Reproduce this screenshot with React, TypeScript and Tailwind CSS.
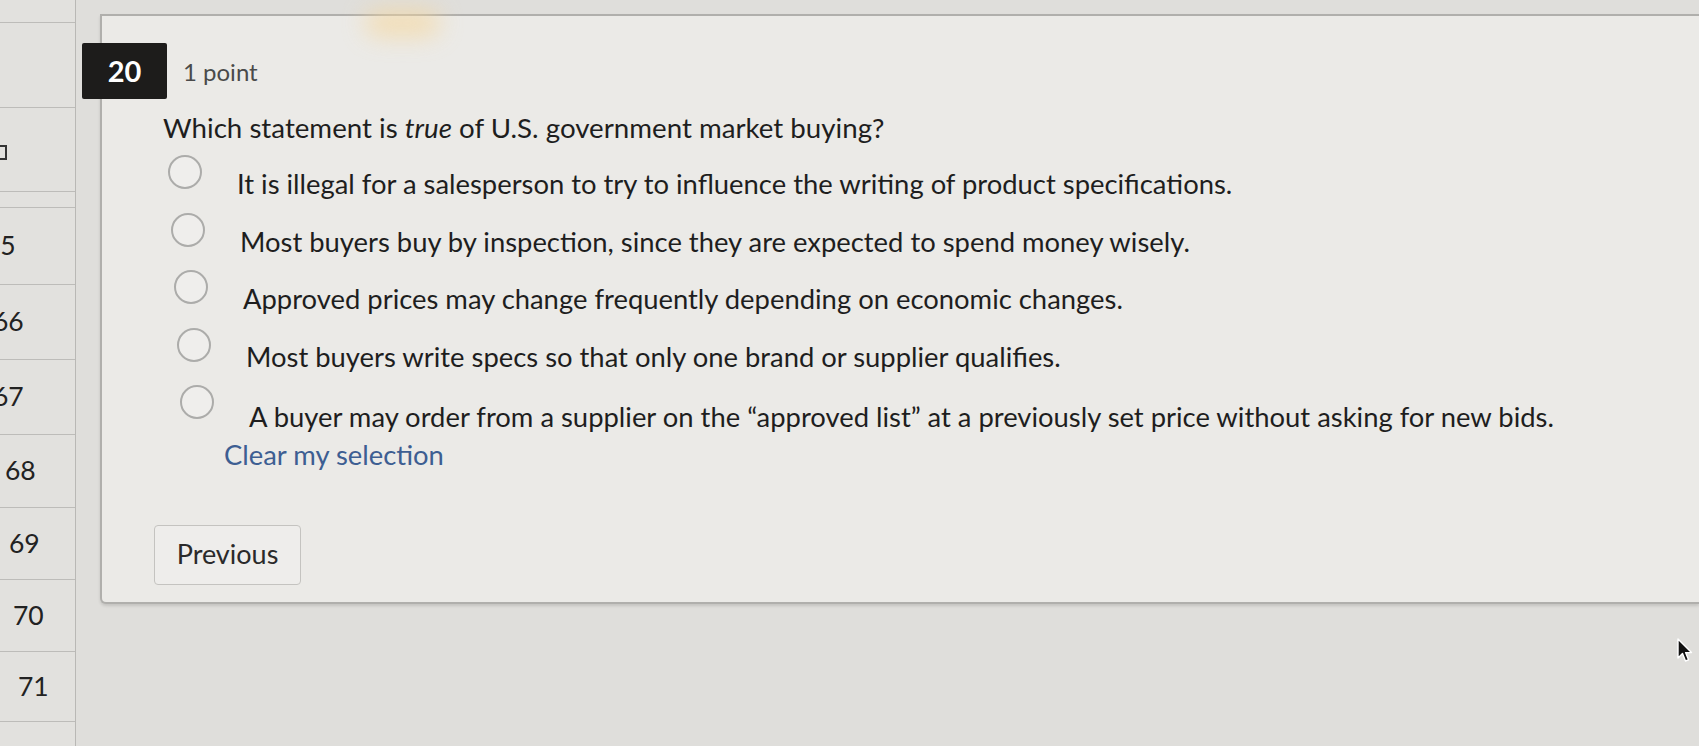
import React from "react";

const options = [
  "It is illegal for a salesperson to try to influence the writing of product specifications.",
  "Most buyers buy by inspection, since they are expected to spend money wisely.",
  "Approved prices may change frequently depending on economic changes.",
  "Most buyers write specs so that only one brand or supplier qualifies.",
  "A buyer may order from a supplier on the \u201capproved list\u201d at a previously set price without asking for new bids.",
];

function Sidebar() {
  return (
    <div className="w-[76px] shrink-0 h-full flex flex-col border-r border-[#b9b8b5] bg-[#e2e1de] overflow-hidden text-[26.5px] text-[#222]">
      <div className="h-[23px] border-b border-[#bdbcb9]" />
      <div className="h-[85px] border-b border-[#bdbcb9]" />
      <div className="h-[84px] border-b border-[#bdbcb9] flex items-center">
        <div className="ml-[-8px] w-[15px] h-[15px] border-2 border-[#333] mt-[6px]" />
      </div>
      <div className="h-[16px] border-b border-[#bdbcb9]" />
      <div className="h-[77px] border-b border-[#bdbcb9] flex items-center ml-[-15px]">65</div>
      <div className="h-[75px] border-b border-[#bdbcb9] flex items-center ml-[-7px]">66</div>
      <div className="h-[75px] border-b border-[#bdbcb9] flex items-center ml-[-7px]">67</div>
      <div className="h-[73px] border-b border-[#bdbcb9] flex items-center pl-[5px]">68</div>
      <div className="h-[72px] border-b border-[#bdbcb9] flex items-center pl-[9px]">69</div>
      <div className="h-[72px] border-b border-[#bdbcb9] flex items-center pl-[13px]">70</div>
      <div className="h-[70px] border-b border-[#bdbcb9] flex items-center pl-[18px]">71</div>
      <div className="flex-1" />
    </div>
  );
}

function Radio() {
  return (
    <div className="w-[34px] h-[34px] shrink-0 rounded-full border-2 border-[#acacaa] bg-[#efeeec]" />
  );
}

export default function App() {
  return (
    <div className="relative w-[1699px] h-[746px] overflow-hidden bg-[#dfdedb] flex font-['Lato',sans-serif] text-[#1e1e1e]">
      <Sidebar />
      <div className="flex-1 pl-[24px] pt-[14px]">
        <div className="h-[590px] bg-[#ebeae7] border-t-2 border-l-2 border-b-2 border-[#b0afac] rounded-bl-[6px] shadow-[0_2px_3px_rgba(0,0,0,0.12)] flex flex-col">
          <div className="flex items-center mt-[27px]">
            <div className="ml-[-20px] w-[85px] h-[56px] bg-[#1d1c1b] rounded-[2px] flex items-center justify-center text-white text-[29px] font-bold">
              20
            </div>
            <div className="ml-[16px] text-[24px] text-[#4a4a4a] mt-[2px]">1 point</div>
          </div>
          <div className="ml-[61px] mt-[14px] text-[27.7px] leading-[30px]">
            Which statement is <span className="italic">true</span> of U.S. government market buying?
          </div>
          <div className="mt-[12px] flex flex-col">
            {options.map((o, i) => (
              <div key={i} className="h-[57.5px] flex items-start" style={{ paddingLeft: 66 + i * 3 }}>
                <Radio />
                <div className="ml-[35px] mt-[14px] text-[27.4px] leading-[30px] whitespace-nowrap" style={{ marginTop: 14 + (i === 4 ? 3 : 0) }}>{o}</div>
              </div>
            ))}
          </div>
          <div className="ml-[122px] mt-[-3px] text-[27.4px] leading-[30px] text-[#3d5e92]">Clear my selection</div>
          <div className="mt-[55px] ml-[52px]">
            <div className="w-[147px] h-[60px] border border-[#c4c3c0] rounded-[4px] bg-[#eeedeb] flex items-center justify-center text-[27px] text-[#2a2a2a]">
              Previous
            </div>
          </div>
        </div>
      </div>
      <div className="absolute left-[365px] top-[10px] w-[75px] h-[26px] rounded-full bg-[#f6d79c] opacity-70 blur-md" />
      <svg className="absolute left-[1676px] top-[638px]" width="18" height="26" viewBox="0 0 18 26">
        <path d="M2 1 L2 20 L6.5 15.5 L9.5 23 L12.5 21.8 L9.6 14.6 L15.5 14.6 Z" fill="#111" stroke="#fff" strokeWidth="1.4" strokeLinejoin="round" />
      </svg>
    </div>
  );
}
